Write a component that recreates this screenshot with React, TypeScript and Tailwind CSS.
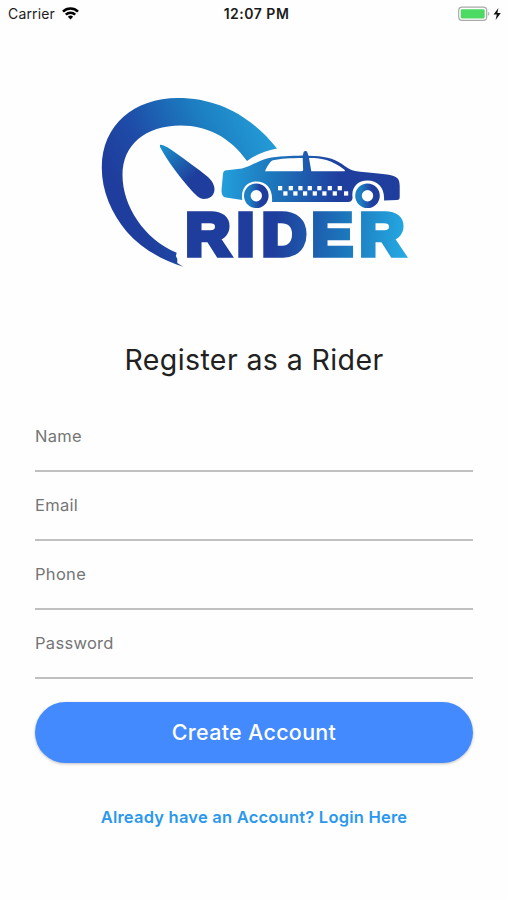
import { useState } from "react";

const fields = [
  { name: "Name", type: "text" },
  { name: "Email", type: "email" },
  { name: "Phone", type: "tel" },
  { name: "Password", type: "password" },
];

const topChecks = [278, 288.7, 298.3, 307.7, 317.3, 327.7, 337.7];
const bottomChecks = [283.3, 293.3, 303, 312.7, 322.3, 332.7, 344];

function StatusBar() {
  return (
    <header className="grid grid-cols-3 items-center h-7 pl-2 pr-1 text-[#1c1c1c]">
      <div className="flex items-center gap-[7px] pb-px">
        <span className="text-[14px] tracking-[0.15px]">Carrier</span>
        <svg width="17" height="13" viewBox="0 0 17 13" fill="none" stroke="#000" strokeWidth="2.5">
          <path d="M1 4.6a10.6 10.6 0 0 1 15 0" />
          <path d="M3.8 7.6a6.7 6.7 0 0 1 9.4 0" />
          <path d="M8.5 12.4 5.9 9.8a3.7 3.7 0 0 1 5.2 0z" fill="#000" stroke="none" />
        </svg>
      </div>
      <span className="text-center text-[14px] font-semibold tracking-[0.5px] whitespace-nowrap pl-0.5 pb-0.5">12:07 PM</span>
      <div className="flex items-center justify-end">
        <svg width="45" height="16" viewBox="0 0 45 16">
          <rect x="0.7" y="1.2" width="28" height="13.2" rx="3.4" fill="#fff" stroke="#aaa" strokeWidth="1.2" />
          <rect x="2.7" y="3.2" width="24" height="9.2" rx="1.4" fill="#4cd964" />
          <path d="M30.2 5.8c1.6.5 1.6 3.5 0 4z" fill="#aaa" />
          <path d="M40.4 2 35.6 8.6h3.2L37.6 14l5.2-7h-3.4z" fill="#111" />
        </svg>
      </div>
    </header>
  );
}

function Logo() {
  return (
    <svg className="block" width="320" height="180" viewBox="94 92 320 180">
      <defs>
        <linearGradient id="dial" gradientUnits="userSpaceOnUse" x1="118" y1="190" x2="262" y2="120">
          <stop offset="0" stopColor="#1f3d9c" />
          <stop offset="0.25" stopColor="#1e4ca8" />
          <stop offset="0.65" stopColor="#1c7dc0" />
          <stop offset="1" stopColor="#239bd6" />
        </linearGradient>
        <linearGradient id="needle" gradientUnits="userSpaceOnUse" x1="162" y1="147" x2="206" y2="192">
          <stop offset="0" stopColor="#1c8fcd" />
          <stop offset="0.35" stopColor="#1d65b0" />
          <stop offset="0.7" stopColor="#1f3d9c" />
        </linearGradient>
        <linearGradient id="car" gradientUnits="userSpaceOnUse" x1="222" y1="180" x2="400" y2="190">
          <stop offset="0" stopColor="#239fdb" />
          <stop offset="0.3" stopColor="#1d74ba" />
          <stop offset="0.65" stopColor="#1f3f9f" />
          <stop offset="1" stopColor="#1f3d9c" />
        </linearGradient>
        <linearGradient id="wheel">
          <stop offset="0.1" stopColor="#1c80c4" />
          <stop offset="0.75" stopColor="#1f3d9c" />
        </linearGradient>
        <linearGradient id="word" gradientUnits="userSpaceOnUse" x1="180" y1="225" x2="390" y2="240">
          <stop offset="0.4" stopColor="#1f3d9c" />
          <stop offset="0.72" stopColor="#1c76bb" />
          <stop offset="1" stopColor="#25a9e2" />
        </linearGradient>
      </defs>

      <path
        fill="url(#dial)"
        d="M183 266.8C160 259 141 248 127 232C111 213 101.500 190 101.800 167C102 125 134 98 178 98C218 98 251 116 277 148.500C265 151 255 155 247 161C230 137 207 125.500 181 125.500C145 125.500 122.500 145 122.500 175C122.500 206 144 239 176.700 252.800L175.900 256L177.300 259V263Z"
      />
      <path
        fill="url(#needle)"
        d="M160 145C162 144 168 147.500 173 151C186 160 198 169 208 177C219 187 215 199 204 199C199 199 195 194 192 191C179 176 168 162 160 147Z"
      />

      <path
        fill="url(#car)"
        fillRule="evenodd"
        d="M223 174C223.500 171 224.500 170.600 227 170.300L242 168.500C251 166 259 160.500 267 158.500C279 156 290 156 302.800 155.600L303.500 152.500C304 150.500 307 150.500 307.400 152.500L308.500 155.700C324 156 333 158 342 164C346 167 350 170 355 171C369 173 384 173.500 392 175.500C398 177 399.700 180 399.700 186V197C399.700 199 399 199.800 397 200L384 200.600C385 188 378 180.500 367.500 180.500C357 180.500 351 188 352.600 198C352 200.500 351 202 348 202H272C273 189 267 181.500 256.300 181.500C246 181.500 240.500 190 242.300 200L226 197.500C222.500 197 221.500 194 221.500 190ZM265 171.300H301.500C303 171.300 303.200 170.500 303.100 169L302.700 158C290 158.200 281 158.500 273 160.300C270 161 267 167 265 171.300ZM309 158L311.300 171.300H343C345.500 171.300 345.500 170.500 343.500 169C332 160.500 323 158 309 158Z"
      />
      {topChecks.map((x) => (
        <rect key={x} x={x} y="186" width="4.2" height="4.3" fill="#fff" />
      ))}
      {bottomChecks.map((x) => (
        <rect key={x} x={x} y="191.300" width="4.2" height="4.3" fill="#fff" />
      ))}
      <circle cx="256.300" cy="195.800" r="9" fill="none" stroke="url(#wheel)" strokeWidth="6.600" />
      <circle cx="367.500" cy="195.800" r="9" fill="none" stroke="url(#wheel)" strokeWidth="6.600" />

      <text
        x="178.6 227.8 251.9 299.7 345.9"
        y="254.6"
        transform="scale(1.04 1)"
        className="font-['Liberation_Sans'] font-bold text-[59px]"
        fill="url(#word)"
        stroke="url(#word)"
        strokeWidth="5.400"
        strokeLinejoin="miter"
      >
        RIDER
      </text>
    </svg>
  );
}

export default function App() {
  const [values, setValues] = useState<Record<string, string>>({});

  return (
    <div className="flex flex-col h-[900px] bg-[#fefefe] font-['Inter',sans-serif] overflow-hidden">
      <StatusBar />

      <main className="flex flex-col items-center pt-16 pl-[35px] pr-[34px]">
        <Logo />

        <h1 className="mt-[68px] text-[28.5px] leading-[40px] tracking-[0.4px] text-[#212121] whitespace-nowrap">
          Register as a Rider
        </h1>

        <form className="w-full mt-[23px]" onSubmit={(e) => e.preventDefault()}>
          {fields.map((field) => (
            <input
              key={field.name}
              type={field.type}
              placeholder={field.name}
              value={values[field.name] ?? ""}
              onChange={(e) => setValues({ ...values, [field.name]: e.target.value })}
              className="block w-full h-[69px] pb-0.5 border-b-2 border-[#c0c0c0] text-[16.5px] tracking-[0.3px] placeholder:text-[#757575] outline-none"
            />
          ))}
          <button className="block w-full h-[61px] mt-[23px] rounded-full bg-[#448aff] text-white text-[21.5px] font-medium tracking-[0.3px] shadow-[0_1px_3px_rgba(0,0,0,0.25)]">
            Create Account
          </button>
        </form>

        <a href="#" className="mt-[42px] text-[16.5px] leading-6 font-semibold tracking-[0.22px] text-[#2b98ee] whitespace-nowrap">
          Already have an Account? Login Here
        </a>
      </main>
    </div>
  );
}
